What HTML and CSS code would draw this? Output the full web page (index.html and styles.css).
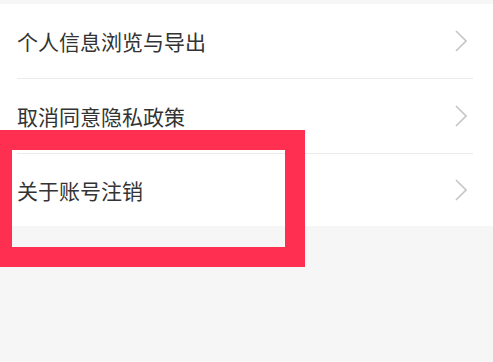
FILE: index.html
```html
<!DOCTYPE html>
<html lang="zh-CN">
<head>
    <meta charset="UTF-8">
    <meta name="viewport" content="width=device-width, initial-scale=1.0">
    <title>隐私设置</title>
    <link rel="stylesheet" href="styles.css">
</head>
<body>
    <div class="settings-list">
        <div class="settings-item">
            <span class="item-label">个人信息浏览与导出</span>
            <svg class="chevron" width="12" height="22" viewBox="0 0 12 22"><path d="M1 1 L11 11 L1 21" /></svg>
        </div>
        <div class="settings-item">
            <span class="item-label">取消同意隐私政策</span>
            <svg class="chevron" width="12" height="22" viewBox="0 0 12 22"><path d="M1 1 L11 11 L1 21" /></svg>
        </div>
        <div class="settings-item last">
            <span class="item-label">关于账号注销</span>
            <svg class="chevron" width="12" height="22" viewBox="0 0 12 22"><path d="M1 1 L11 11 L1 21" /></svg>
        </div>
    </div>

    <!-- highlight frame drawn over the last row -->
    <div class="highlight-box"></div>
</body>
</html>
```

FILE: styles.css
```css
* {
    margin: 0;
    padding: 0;
    box-sizing: border-box;
}

body {
    font-family: "Noto Sans CJK SC", "Noto Sans", sans-serif;
    background-color: #f6f6f6;
    min-height: 100vh;
    position: relative;
    overflow: hidden;
}

.settings-list {
    background-color: white;
    margin-top: 4px;
}

.settings-item {
    display: flex;
    align-items: center;
    justify-content: space-between;
    height: 75px;
    margin: 0 20px 0 17px;
    padding-right: 6px;
    border-bottom: 1px solid #ebebeb;
}

.settings-item.last {
    height: 72px;
    border-bottom: none;
}

.item-label {
    font-size: 21px;
    color: #333;
    line-height: 1;
}

.chevron path {
    fill: none;
    stroke: #c6c6c6;
    stroke-width: 1.6;
}

.highlight-box {
    position: absolute;
    left: -8px;
    top: 130px;
    width: 313px;
    height: 137px;
    border: 20px solid #ff2f51;
}
```
